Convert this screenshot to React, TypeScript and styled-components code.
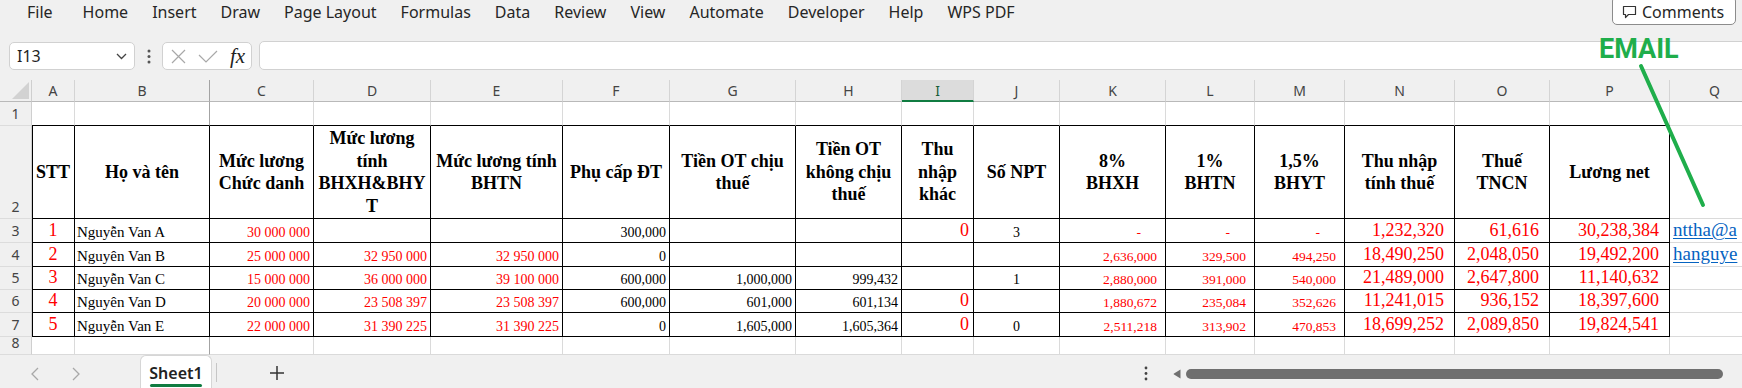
import React from 'react';
import styled, { createGlobalStyle } from 'styled-components';

const UI_FONT = `"Noto Sans", "Open Sans", sans-serif`;
const SERIF = `"Liberation Serif", "DejaVu Serif", serif`;
const LIGHT = '#dadada';
const FREEZE = '#a3a3a3';
const BLACK = '#000000';
const RED = '#ff0000';

const GlobalStyle = createGlobalStyle`
  html, body { margin: 0; padding: 0; }
  body {
    width: 1742px;
    height: 388px;
    overflow: hidden;
    background: #f0f0f0;
    font-family: ${UI_FONT};
  }
  #root { width: 1742px; height: 388px; }
`;

const Page = styled.div`
  position: relative;
  width: 1742px;
  height: 388px;
  overflow: hidden;
  background: #f0f0f0;
  display: flex;
  flex-direction: column;
`;

/* ---------- Menu bar ---------- */
const MenuBar = styled.div`
  height: 40px;
  flex-shrink: 0;
  display: flex;
  align-items: flex-start;
  justify-content: space-between;
`;

const MenuList = styled.nav`
  display: flex;
  gap: 24px;
  padding: 1px 0 0 27px;
`;

const MenuItem = styled.span<{ $extra?: number }>`
  margin-right: ${p => p.$extra ?? 0}px;
  font-family: ${UI_FONT};
  font-size: 16px;
  line-height: 22px;
  color: #262626;
`;

const CommentsButton = styled.button`
  box-sizing: border-box;
  margin: -4px 6px 0 0;
  width: 124px;
  height: 29px;
  padding: 3px 0 0 9px;
  display: flex;
  align-items: center;
  gap: 5px;
  background: #ffffff;
  border: 1px solid #8c8c8c;
  border-radius: 5px;
  font-family: ${UI_FONT};
  font-size: 16px;
  line-height: 22px;
  color: #262626;
`;

/* ---------- Formula bar ---------- */
const FormulaBar = styled.div`
  box-sizing: border-box;
  height: 40px;
  flex-shrink: 0;
  display: flex;
  align-items: flex-start;
  padding: 2px 0 0 9px;
`;

const NameBox = styled.div`
  box-sizing: border-box;
  width: 126px;
  height: 28px;
  display: flex;
  align-items: center;
  justify-content: space-between;
  padding: 0 7px 0 7px;
  background: #ffffff;
  border: 1px solid #d1d1d1;
  border-radius: 5px;
  font-family: ${UI_FONT};
  font-size: 16px;
  color: #1f1f1f;
`;

const Grip = styled.div`
  width: 27px;
  height: 28px;
  display: flex;
  align-items: center;
  justify-content: center;
`;

const FxBox = styled.div`
  box-sizing: border-box;
  width: 90px;
  height: 28px;
  display: flex;
  align-items: center;
  padding-left: 8px;
  background: #ffffff;
  border: 1px solid #d1d1d1;
  border-radius: 5px;
`;

const FxIcon = styled.span<{ $gap: number }>`
  display: flex;
  align-items: center;
  margin-left: ${p => p.$gap}px;
`;

const FxText = styled.span`
  margin-left: 12px;
  font-family: ${SERIF};
  font-style: italic;
  font-size: 21px;
  line-height: 24px;
  color: #222222;
`;

const FormulaInput = styled.div`
  box-sizing: border-box;
  flex: 1;
  height: 29px;
  margin: -1px -10px 0 7px;
  background: #ffffff;
  border: 1px solid #d1d1d1;
  border-radius: 5px;
`;

/* ---------- Sheet grid ---------- */
const COLS: { l: string; w: number }[] = [
  { l: 'A', w: 43 }, { l: 'B', w: 135 }, { l: 'C', w: 104 }, { l: 'D', w: 117 },
  { l: 'E', w: 132 }, { l: 'F', w: 107 }, { l: 'G', w: 126 }, { l: 'H', w: 106 },
  { l: 'I', w: 72 }, { l: 'J', w: 86 }, { l: 'K', w: 106 }, { l: 'L', w: 89 },
  { l: 'M', w: 90 }, { l: 'N', w: 110 }, { l: 'O', w: 95 }, { l: 'P', w: 120 },
  { l: 'Q', w: 90 },
];

const ROW_HEIGHTS = [22, 24, 93, 24, 24, 23, 23, 24, 18];

const Sheet = styled.div`
  flex-shrink: 0;
  align-self: flex-start;
  display: grid;
  grid-template-columns: 32px ${COLS.map(c => `${c.w}px`).join(' ')};
  grid-template-rows: ${ROW_HEIGHTS.map(h => `${h}px`).join(' ')};
  background: #ffffff;
`;

const Corner = styled.div`
  box-sizing: border-box;
  background: #f0f0f0;
  border-right: 1px solid #cfcfcf;
  border-bottom: 1px solid #b9b9b9;
  display: flex;
  align-items: flex-end;
  justify-content: flex-end;
  padding: 0 2px 2px 0;
`;

const ColHead = styled.div<{ $selected?: boolean; $sep: string }>`
  box-sizing: border-box;
  display: flex;
  align-items: center;
  justify-content: center;
  background: ${p => (p.$selected ? '#dcdcdc' : '#f0f0f0')};
  border-right: 1px solid ${p => p.$sep};
  border-bottom: ${p => (p.$selected ? '2px solid #107c41' : '1px solid #b9b9b9')};
  font-family: ${UI_FONT};
  font-size: 14px;
  color: ${p => (p.$selected ? '#185c37' : '#444444')};
`;

const RowHead = styled.div`
  box-sizing: border-box;
  display: flex;
  align-items: flex-end;
  justify-content: center;
  padding-bottom: 2px;
  background: #f0f0f0;
  border-right: 1px solid #cfcfcf;
  border-bottom: 1px solid #dcdcdc;
  font-family: ${UI_FONT};
  font-size: 14px;
  line-height: 19px;
  color: #444444;
`;

const GridCell = styled.div<{ $rb: string; $bb: string; $lb?: string }>`
  box-sizing: border-box;
  min-width: 0;
  overflow: hidden;
  background: #ffffff;
  border-right: 1px solid ${p => p.$rb};
  border-bottom: 1px solid ${p => p.$bb};
  box-shadow: ${p => (p.$lb ? `inset 1px 0 0 ${p.$lb}` : 'none')};
`;

type Align = 'flex-start' | 'center' | 'flex-end';

const DataCell = styled(GridCell)<{ $align: Align; $size: number; $tone: string; $pr: number; $pl: number }>`
  display: flex;
  align-items: flex-end;
  justify-content: ${p => p.$align};
  padding: 0 ${p => p.$pr}px 1px ${p => p.$pl}px;
  font-family: ${SERIF};
  font-size: ${p => p.$size}px;
  line-height: 1.15;
  color: ${p => p.$tone};
  white-space: nowrap;
`;

const TitleCell = styled(GridCell)`
  display: flex;
  flex-direction: column;
  justify-content: center;
  text-align: center;
  padding: 0 2px;
  font-family: ${SERIF};
  font-weight: 700;
  font-size: 18px;
  line-height: 22.5px;
  color: #000000;
  overflow-wrap: anywhere;
`;

const Link = styled.span`
  color: #0563c1;
  text-decoration: underline;
  text-underline-offset: 2px;
`;

/* ---------- Tab bar ---------- */
const TabBar = styled.div`
  box-sizing: border-box;
  height: 33px;
  flex-shrink: 0;
  display: flex;
  align-items: stretch;
  background: #f0f0f0;
`;

const NavArrows = styled.div`
  display: flex;
  align-items: center;
  gap: 26px;
  margin-left: 27px;
  padding-top: 4px;
`;

const NavArrow = styled.span`
  width: 15px;
  display: flex;
  justify-content: center;
`;

const SheetTab = styled.div`
  box-sizing: border-box;
  position: relative;
  margin-left: 57px;
  width: 72px;
  display: flex;
  align-items: center;
  justify-content: center;
  padding-top: 1px;
  background: #ffffff;
  border: 1px solid #d6d6d6;
  border-bottom: none;
  border-radius: 6px 6px 0 0;
  font-family: ${UI_FONT};
  font-weight: 600;
  font-size: 16px;
  color: #222222;
`;

const TabUnderline = styled.span`
  position: absolute;
  left: 9px;
  right: 9px;
  bottom: 1px;
  height: 3px;
  border-radius: 2px;
  background: #107c41;
`;

const TabSeparator = styled.span`
  align-self: center;
  margin: 2px 0 0 4px;
  width: 1px;
  height: 19px;
  background: #c6c6c6;
`;

const AddSheet = styled.span`
  margin-left: 48px;
  width: 24px;
  display: flex;
  align-items: center;
  justify-content: center;
  padding-top: 3px;
`;

const Spacer = styled.span`
  flex: 1;
`;

const Kebab = styled.span`
  width: 16px;
  display: flex;
  align-items: center;
  justify-content: center;
  padding-top: 4px;
`;

const ScrollArea = styled.div`
  width: 574px;
  margin-left: 14px;
  display: flex;
  align-items: center;
  padding: 5px 0 0 5px;
  box-sizing: border-box;
`;

const ScrollThumb = styled.span`
  margin-left: 5px;
  width: 537px;
  height: 10px;
  border-radius: 5px;
  background: #6f6f6f;
`;

/* ---------- Annotation overlay ---------- */
const EmailLabel = styled.div`
  position: absolute;
  left: 1599px;
  top: 36px;
  font-family: Roboto, "Noto Sans", sans-serif;
  font-weight: 700;
  font-size: 27px;
  line-height: 27px;
  color: #1fae4b;
`;

const Pointer = styled.svg`
  position: absolute;
  left: 1630px;
  top: 58px;
  pointer-events: none;
`;

/* ---------- Data ---------- */
const MENU = ['File', 'Home', 'Insert', 'Draw', 'Page Layout', 'Formulas', 'Data', 'Review', 'View', 'Automate', 'Developer', 'Help', 'WPS PDF'];

type Spec = { align: Align; size: number; tone: string; pr: number; pl: number };
const redSmall: Spec = { align: 'flex-end', size: 14, tone: RED, pr: 3, pl: 0 };
const blackSmall: Spec = { align: 'flex-end', size: 14, tone: BLACK, pr: 3, pl: 0 };
const acct: Spec = { align: 'flex-end', size: 13.5, tone: RED, pr: 8, pl: 0 };
const acctBig: Spec = { align: 'flex-end', size: 18, tone: RED, pr: 10, pl: 0 };

const SPEC: Spec[] = [
  { align: 'center', size: 18, tone: RED, pr: 0, pl: 0 },
  { align: 'flex-start', size: 15, tone: BLACK, pr: 0, pl: 2 },
  redSmall, redSmall, redSmall,
  blackSmall, blackSmall, blackSmall,
  { align: 'flex-end', size: 18, tone: RED, pr: 4, pl: 0 },
  { align: 'center', size: 14, tone: BLACK, pr: 0, pl: 0 },
  acct, acct, acct,
  acctBig, acctBig, acctBig,
  { align: 'flex-start', size: 19, tone: BLACK, pr: 0, pl: 3 },
];

const TITLES: React.ReactNode[] = [
  'STT', 'Họ và tên', 'Mức lương Chức danh', 'Mức lương tính BHXH&BHYT', 'Mức lương tính BHTN',
  'Phụ cấp ĐT', 'Tiền OT chịu thuế', 'Tiền OT không chịu thuế', 'Thu nhập khác', 'Số NPT',
  <>8%<br />BHXH</>, <>1%<br />BHTN</>, <>1,5%<br />BHYT</>, <>Thu nhập<br />tính thuế</>,
  <>Thuế<br />TNCN</>, 'Lương net',
];

const ROWS: string[][] = [
  ['1', 'Nguyễn Van A', '30 000 000', '', '', '300,000', '', '', '0', '3', '-', '-', '-', '1,232,320', '61,616', '30,238,384', 'nttha@a'],
  ['2', 'Nguyên Van B', '25 000 000', '32 950 000', '32 950 000', '0', '', '', '', '', '2,636,000', '329,500', '494,250', '18,490,250', '2,048,050', '19,492,200', 'hanguye'],
  ['3', 'Nguyễn Van C', '15 000 000', '36 000 000', '39 100 000', '600,000', '1,000,000', '999,432', '', '1', '2,880,000', '391,000', '540,000', '21,489,000', '2,647,800', '11,140,632', ''],
  ['4', 'Nguyên Van D', '20 000 000', '23 508 397', '23 508 397', '600,000', '601,000', '601,134', '0', '', '1,880,672', '235,084', '352,626', '11,241,015', '936,152', '18,397,600', ''],
  ['5', 'Nguyễn Van E', '22 000 000', '31 390 225', '31 390 225', '0', '1,605,000', '1,605,364', '0', '0', '2,511,218', '313,902', '470,853', '18,699,252', '2,089,850', '19,824,541', ''],
];

const P_INDEX = 15;
const B_INDEX = 1;

function lightRight(ci: number) {
  return ci === B_INDEX ? FREEZE : LIGHT;
}

/* ---------- Icons ---------- */
const CommentIcon = () => (
  <svg width="15" height="14" viewBox="0 0 15 14" fill="none">
    <path d="M1.5 1.5h12v8h-7l-3 3v-3h-2z" stroke="#333" strokeWidth="1.2" strokeLinejoin="round" />
  </svg>
);

const Chevron = () => (
  <svg width="11" height="7" viewBox="0 0 11 7" fill="none">
    <polyline points="1,1 5.5,5.5 10,1" stroke="#444" strokeWidth="1.3" />
  </svg>
);

const GripDots = () => (
  <svg width="4" height="15" viewBox="0 0 4 15">
    <circle cx="2" cy="2" r="1.5" fill="#555" />
    <circle cx="2" cy="7.5" r="1.5" fill="#555" />
    <circle cx="2" cy="13" r="1.5" fill="#555" />
  </svg>
);

const CrossIcon = () => (
  <svg width="15" height="15" viewBox="0 0 15 15" fill="none">
    <path d="M1 1l13 13M14 1L1 14" stroke="#a8a8a8" strokeWidth="1.2" />
  </svg>
);

const CheckIcon = () => (
  <svg width="20" height="13" viewBox="0 0 20 13" fill="none">
    <polyline points="1,5 8,12 19,1" stroke="#a8a8a8" strokeWidth="1.2" />
  </svg>
);

const SelectAll = () => (
  <svg width="17" height="17" viewBox="0 0 17 17">
    <polygon points="17,0 17,17 0,17" fill="#d2d2d2" />
  </svg>
);

const ArrowLeft = () => (
  <svg width="8" height="14" viewBox="0 0 8 14" fill="none">
    <polyline points="7,1 1,7 7,13" stroke="#a8a8a8" strokeWidth="1.3" />
  </svg>
);

const ArrowRight = () => (
  <svg width="8" height="14" viewBox="0 0 8 14" fill="none">
    <polyline points="1,1 7,7 1,13" stroke="#a8a8a8" strokeWidth="1.3" />
  </svg>
);

const PlusIcon = () => (
  <svg width="16" height="16" viewBox="0 0 16 16" fill="none">
    <path d="M8 1v14M1 8h14" stroke="#333" strokeWidth="1.5" />
  </svg>
);

const KebabIcon = () => (
  <svg width="4" height="15" viewBox="0 0 4 15">
    <circle cx="2" cy="2" r="1.4" fill="#444" />
    <circle cx="2" cy="7.5" r="1.4" fill="#444" />
    <circle cx="2" cy="13" r="1.4" fill="#444" />
  </svg>
);

const ScrollLeft = () => (
  <svg width="8" height="10" viewBox="0 0 8 10">
    <path d="M7.5 0.5v9L1 5.5q-1-0.5 0-1z" fill="#707070" />
  </svg>
);

/* ---------- App ---------- */
export default function App() {
  const cells: React.ReactNode[] = [];

  // column header row
  cells.push(
    <Corner key="corner">
      <SelectAll />
    </Corner>
  );
  COLS.forEach((c, ci) => {
    cells.push(
      <ColHead key={`h-${c.l}`} $selected={c.l === 'I'} $sep={ci === B_INDEX ? FREEZE : '#d4d4d4'}>
        {c.l}
      </ColHead>
    );
  });

  // row 1 (empty, top border of table)
  cells.push(<RowHead key="r1">1</RowHead>);
  COLS.forEach((c, ci) => {
    cells.push(
      <GridCell key={`1-${c.l}`} $rb={lightRight(ci)} $bb={ci <= P_INDEX ? BLACK : LIGHT} />
    );
  });

  // row 2 (titles)
  cells.push(<RowHead key="r2">2</RowHead>);
  COLS.forEach((c, ci) => {
    if (ci <= P_INDEX) {
      cells.push(
        <TitleCell key={`2-${c.l}`} $rb={BLACK} $bb={BLACK} $lb={ci === 0 ? BLACK : undefined}>
          {TITLES[ci]}
        </TitleCell>
      );
    } else {
      cells.push(<GridCell key={`2-${c.l}`} $rb={LIGHT} $bb={LIGHT} />);
    }
  });

  // data rows 3-7
  ROWS.forEach((row, ri) => {
    const rn = ri + 3;
    cells.push(<RowHead key={`r${rn}`}>{rn}</RowHead>);
    row.forEach((val, ci) => {
      const spec = SPEC[ci];
      const inTable = ci <= P_INDEX;
      const isDash = val === '-';
      cells.push(
        <DataCell
          key={`${rn}-${ci}`}
          $rb={inTable ? BLACK : LIGHT}
          $bb={inTable ? BLACK : LIGHT}
          $lb={ci === 0 ? BLACK : undefined}
          $align={spec.align}
          $size={spec.size}
          $tone={spec.tone}
          $pr={isDash ? 24 : spec.pr}
          $pl={spec.pl}
        >
          {ci === 16 && val ? <Link>{val}</Link> : val}
        </DataCell>
      );
    });
  });

  // row 8 (empty)
  cells.push(<RowHead key="r8">8</RowHead>);
  COLS.forEach((c, ci) => {
    cells.push(<GridCell key={`8-${c.l}`} $rb={lightRight(ci)} $bb={LIGHT} />);
  });

  return (
    <Page>
      <GlobalStyle />
      <MenuBar>
        <MenuList>
          {MENU.map(m => (
            <MenuItem key={m} $extra={m === 'File' ? 6 : 0}>{m}</MenuItem>
          ))}
        </MenuList>
        <CommentsButton>
          <CommentIcon />
          Comments
        </CommentsButton>
      </MenuBar>

      <FormulaBar>
        <NameBox>
          <span>I13</span>
          <Chevron />
        </NameBox>
        <Grip>
          <GripDots />
        </Grip>
        <FxBox>
          <FxIcon $gap={0}>
            <CrossIcon />
          </FxIcon>
          <FxIcon $gap={12}>
            <CheckIcon />
          </FxIcon>
          <FxText>fx</FxText>
        </FxBox>
        <FormulaInput />
      </FormulaBar>

      <Sheet>{cells}</Sheet>

      <TabBar>
        <NavArrows>
          <NavArrow>
            <ArrowLeft />
          </NavArrow>
          <NavArrow>
            <ArrowRight />
          </NavArrow>
        </NavArrows>
        <SheetTab>
          Sheet1
          <TabUnderline />
        </SheetTab>
        <TabSeparator />
        <AddSheet>
          <PlusIcon />
        </AddSheet>
        <Spacer />
        <Kebab>
          <KebabIcon />
        </Kebab>
        <ScrollArea>
          <ScrollLeft />
          <ScrollThumb />
        </ScrollArea>
      </TabBar>

      <EmailLabel>EMAIL</EmailLabel>
      <Pointer width="85" height="155" viewBox="0 0 85 155">
        <line x1="11" y1="8" x2="73" y2="147" stroke="#1fae4b" strokeWidth="4" strokeLinecap="round" />
      </Pointer>
    </Page>
  );
}
